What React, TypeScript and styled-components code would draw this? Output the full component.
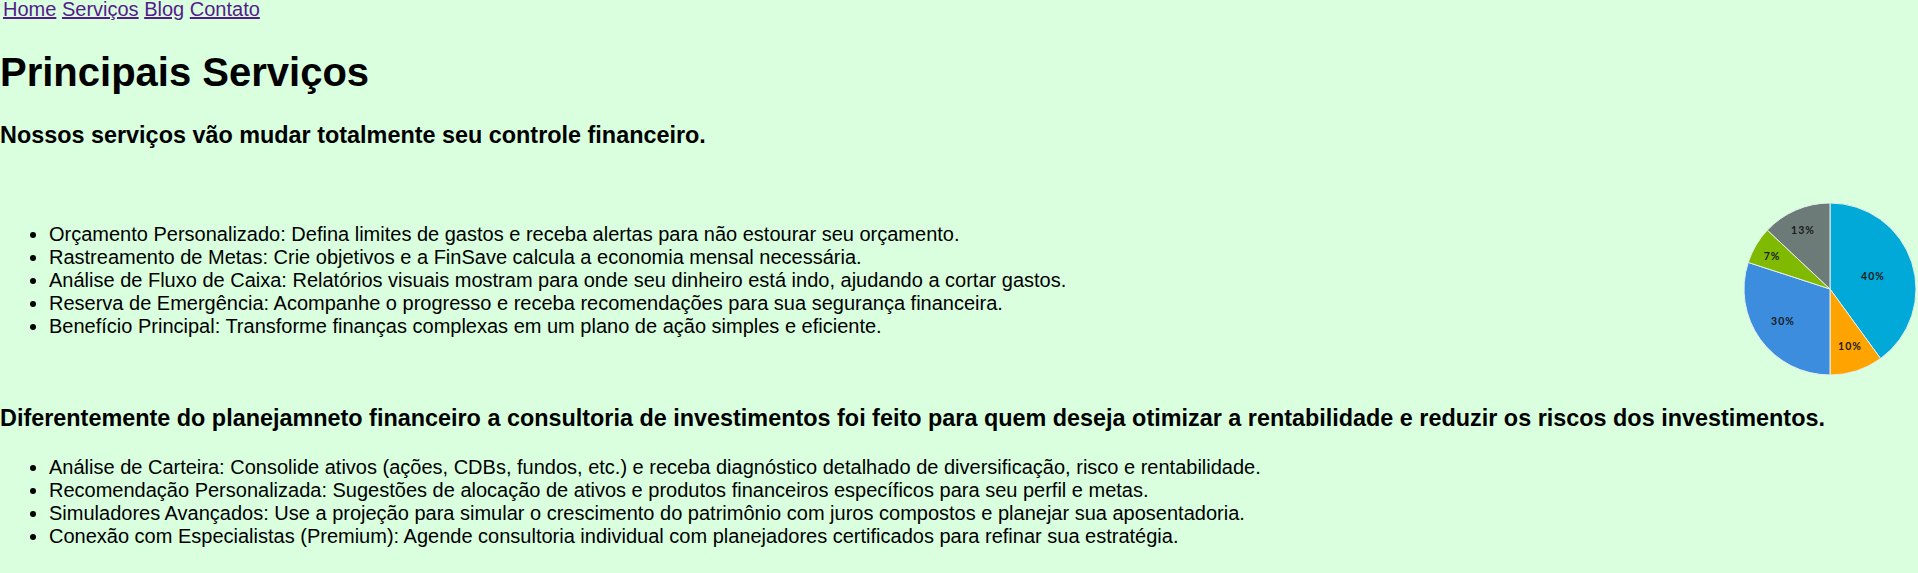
import React from "react";
import styled, { createGlobalStyle } from "styled-components";

const GlobalStyle = createGlobalStyle`
  html, body {
    margin: 0;
    padding: 0;
    background: #d9ffdf;
  }
  body {
    font-family: "Liberation Sans", Arial, sans-serif;
    font-size: 20px;
    color: #000;
  }
`;

const Nav = styled.nav`
  line-height: 18px;
  padding: 0 0 5px 3px;
`;

const NavLink = styled.a`
  color: #551a8b;
  text-decoration: underline;
`;

const Title = styled.h1`
  font-size: 40px;
  font-weight: bold;
  margin: 26.8px 0;
`;

const Subtitle = styled.h3`
  font-size: 23.4px;
  font-weight: bold;
  margin: 23.4px 0;
`;

const Section = styled.section`
  display: flex;
  justify-content: space-between;
  align-items: flex-start;
  padding: 29px 0 5px 0;
`;

const List = styled.ul<{ $top?: number }>`
  margin: ${(p) => (p.$top ?? 20)}px 0 20px 0;
  padding-left: 49px;
  list-style: disc;
`;

const Item = styled.li`
  line-height: 23px;
`;

const PieSvg = styled.svg`
  display: block;
  flex: none;
  width: 176px;
  height: 176px;
`;

const SliceLabel = styled.text`
  font-family: "Lato", "DejaVu Sans", sans-serif;
  font-size: 10.5px;
  font-weight: 700;
  letter-spacing: 1px;
  fill: #1a1a1a;
`;

type Slice = { value: number; color: string; label: string; lx: number; ly: number };

const slices: Slice[] = [
  { value: 40, color: "#00a9d7", label: "40%", lx: 43, ly: -13.5 },
  { value: 10, color: "#ffa300", label: "10%", lx: 20, ly: 56.5 },
  { value: 30, color: "#3d8ddf", label: "30%", lx: -47, ly: 31.5 },
  { value: 7, color: "#7fba00", label: "7%", lx: -58, ly: -33.5 },
  { value: 13, color: "#6c7a78", label: "13%", lx: -27, ly: -59.5 },
];

const PieChart: React.FC = () => {
  const cx = 88;
  const cy = 88;
  const r = 86;
  let acc = 0;
  const pt = (pct: number) => {
    const a = (pct / 100) * Math.PI * 2;
    return [cx + r * Math.sin(a), cy - r * Math.cos(a)];
  };
  return (
    <PieSvg viewBox="0 0 176 176">
      {slices.map((s) => {
        const [x1, y1] = pt(acc);
        acc += s.value;
        const [x2, y2] = pt(acc);
        const large = s.value > 50 ? 1 : 0;
        const d = `M${cx},${cy} L${x1},${y1} A${r},${r} 0 ${large} 1 ${x2},${y2} Z`;
        return <path key={s.label} d={d} fill={s.color} stroke="#e4efe9" strokeWidth={1} strokeLinejoin="round" />;
      })}
      {slices.map((s) => (
        <SliceLabel key={s.label + "t"} x={cx + s.lx} y={cy + s.ly} textAnchor="middle" dominantBaseline="central">
          {s.label}
        </SliceLabel>
      ))}
    </PieSvg>
  );
};

const App: React.FC = () => (
  <>
    <GlobalStyle />
    <Nav>
      <NavLink href="#">Home</NavLink> <NavLink href="#">Serviços</NavLink> <NavLink href="#">Blog</NavLink>{" "}
      <NavLink href="#">Contato</NavLink>
    </Nav>
    <Title>Principais Serviços</Title>
    <Subtitle>Nossos serviços vão mudar totalmente seu controle financeiro.</Subtitle>
    <Section>
      <List $top={22}>
        <Item>Orçamento Personalizado: Defina limites de gastos e receba alertas para não estourar seu orçamento.</Item>
        <Item>Rastreamento de Metas: Crie objetivos e a FinSave calcula a economia mensal necessária.</Item>
        <Item>Análise de Fluxo de Caixa: Relatórios visuais mostram para onde seu dinheiro está indo, ajudando a cortar gastos.</Item>
        <Item>Reserva de Emergência: Acompanhe o progresso e receba recomendações para sua segurança financeira.</Item>
        <Item>Benefício Principal: Transforme finanças complexas em um plano de ação simples e eficiente.</Item>
      </List>
      <PieChart />
    </Section>
    <Subtitle>
      Diferentemente do planejamneto financeiro a consultoria de investimentos foi feito para quem deseja otimizar a
      rentabilidade e reduzir os riscos dos investimentos.
    </Subtitle>
    <List>
      <Item>Análise de Carteira: Consolide ativos (ações, CDBs, fundos, etc.) e receba diagnóstico detalhado de diversificação, risco e rentabilidade.</Item>
      <Item>Recomendação Personalizada: Sugestões de alocação de ativos e produtos financeiros específicos para seu perfil e metas.</Item>
      <Item>Simuladores Avançados: Use a projeção para simular o crescimento do patrimônio com juros compostos e planejar sua aposentadoria.</Item>
      <Item>Conexão com Especialistas (Premium): Agende consultoria individual com planejadores certificados para refinar sua estratégia.</Item>
    </List>
  </>
);

export default App;
